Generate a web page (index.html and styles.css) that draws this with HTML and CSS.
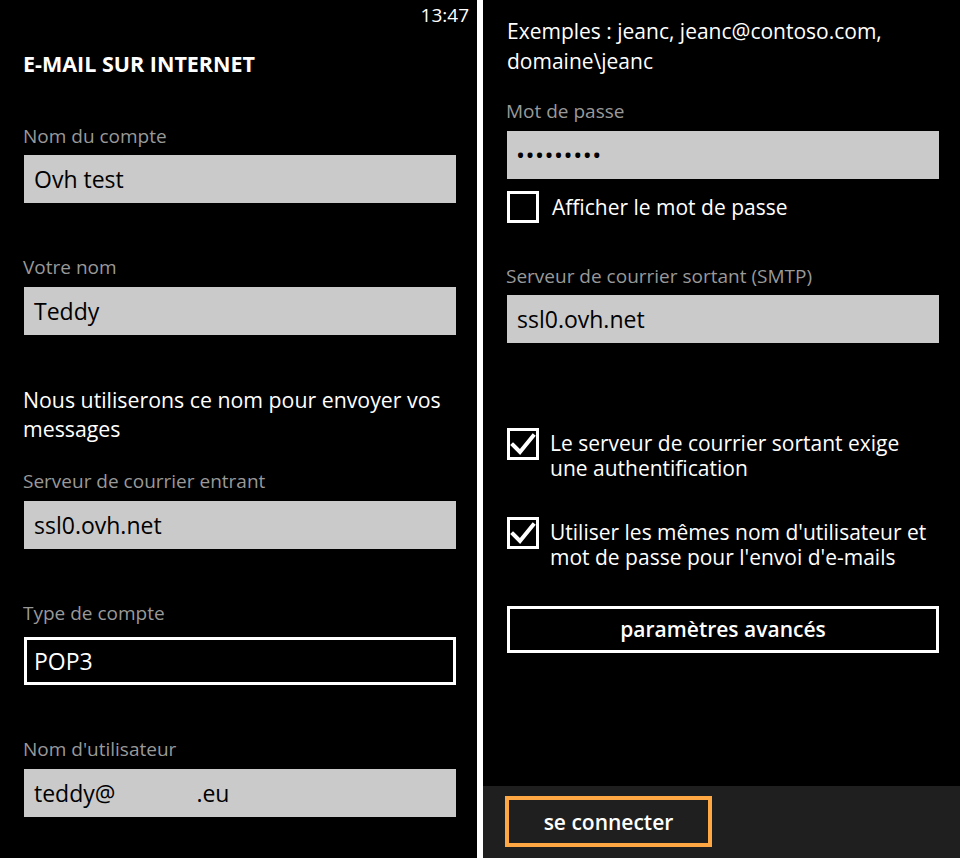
FILE: index.html
```html
<!DOCTYPE html>
<html lang="fr">
<head>
<meta charset="utf-8">
<title>E-mail sur Internet</title>
<link rel="stylesheet" href="styles.css">
</head>
<body>
<div class="screens">
  <section class="panel left">
    <div class="status"><span class="time">13:47</span></div>
    <h1 class="title">E-MAIL SUR INTERNET</h1>

    <div class="field f1">
      <div class="label">Nom du compte</div>
      <div class="input">Ovh test</div>
    </div>

    <div class="field f2">
      <div class="label">Votre nom</div>
      <div class="input">Teddy</div>
    </div>

    <p class="note">Nous utiliserons ce nom pour envoyer vos messages</p>

    <div class="field f3">
      <div class="label">Serveur de courrier entrant</div>
      <div class="input">ssl0.ovh.net</div>
    </div>

    <div class="field f4">
      <div class="label">Type de compte</div>
      <div class="select">POP3</div>
    </div>

    <div class="field f5">
      <div class="label">Nom d'utilisateur</div>
      <div class="input">teddy@<span class="gap"></span>.eu</div>
    </div>
  </section>

  <div class="divider"></div>

  <section class="panel right">
    <div class="content">
      <p class="examples">Exemples : jeanc, jeanc@contoso.com, domaine\jeanc</p>

      <div class="field r1">
        <div class="label">Mot de passe</div>
        <div class="input pwd">•••••••••</div>
      </div>

      <div class="check r-show">
        <span class="box"></span>
        <span class="check-text">Afficher le mot de passe</span>
      </div>

      <div class="field r2">
        <div class="label">Serveur de courrier sortant (SMTP)</div>
        <div class="input">ssl0.ovh.net</div>
      </div>

      <div class="check multi r-auth">
        <span class="box checked"><svg viewBox="0 0 32 32" width="32" height="32"><polyline points="6,17 13,24 26,8" fill="none" stroke="#fff" stroke-width="4" stroke-linecap="square"/></svg></span>
        <span class="check-text">Le serveur de courrier sortant exige une authentification</span>
      </div>

      <div class="check multi r-same">
        <span class="box checked"><svg viewBox="0 0 32 32" width="32" height="32"><polyline points="6,17 13,24 26,8" fill="none" stroke="#fff" stroke-width="4" stroke-linecap="square"/></svg></span>
        <span class="check-text">Utiliser les mêmes nom d'utilisateur et mot de passe pour l'envoi d'e-mails</span>
      </div>

      <div class="button advanced">paramètres avancés</div>
    </div>

    <div class="appbar">
      <div class="button connect">se connecter</div>
    </div>
  </section>
</div>
</body>
</html>
```

FILE: styles.css
```css
* { box-sizing: border-box; }

html, body {
  margin: 0;
  padding: 0;
  background: #000;
}

body {
  font-family: "Open Sans", "Noto Sans", "Liberation Sans", sans-serif;
  color: #fff;
  width: 960px;
  height: 858px;
  overflow: hidden;
}

.screens {
  display: flex;
  width: 960px;
  height: 858px;
}

.panel {
  width: 477px;
  height: 858px;
  background: #000;
  display: flex;
  flex-direction: column;
}

.divider {
  width: 6px;
  background: #fff;
}

/* ---------- left ---------- */
.left {
  padding-left: 24px;
  padding-right: 21px;
}

.status {
  height: 31px;
  line-height: 31px;
  font-size: 19px;
  text-align: right;
  margin-right: -13px;
}

.title {
  margin: 18px 0 0 -1px;
  font-size: 21.5px;
  line-height: 30px;
  font-weight: 700;
}

.label {
  font-size: 19px;
  line-height: 24px;
  height: 24px;
  color: #999;
  margin-left: -1px;
  white-space: nowrap;
}

.input {
  margin-top: 7px;
  height: 48px;
  background: #cacaca;
  color: #000;
  font-size: 23px;
  line-height: 48px;
  padding-left: 10px;
  white-space: nowrap;
}

.select {
  margin-top: 12px;
  height: 48px;
  border: 3px solid #fff;
  color: #fff;
  font-size: 23px;
  line-height: 42px;
  padding-left: 7px;
}

.gap {
  display: inline-block;
  width: 81px;
}

.f1 { margin-top: 45px; }
.f2 { margin-top: 52px; }
.f2 .input { margin-top: 8px; }
.note {
  margin: 50px 0 0 -1px;
  font-size: 21.3px;
  line-height: 29px;
}
.f3 { margin-top: 26px; }
.f3 .input { margin-top: 8px; }
.f4 { margin-top: 52px; }
.f5 { margin-top: 52px; }
.f5 .input { margin-top: 8px; }

/* ---------- right ---------- */
.right {
  justify-content: space-between;
}

.content {
  padding: 16px 21px 0 24px;
}

.examples {
  margin: 0;
  font-size: 21px;
  line-height: 30px;
}

.r1 { margin-top: 23px; }
.r1 .input { margin-top: 8px; }

.pwd {
  font-size: 24px;
  letter-spacing: 0.5px;
  padding-left: 9px;
}

.check {
  display: flex;
  align-items: flex-start;
}

.box {
  flex: none;
  width: 32px;
  height: 32px;
  border: 3px solid #fff;
  position: relative;
}

.box svg {
  position: absolute;
  left: -3px;
  top: -3px;
}

.check-text {
  margin-left: 13px;
  font-size: 21px;
  line-height: 32px;
}

.r-show { margin-top: 12px; }

.r2 { margin-top: 41px; }

.multi .check-text {
  margin-left: 11px;
  line-height: 25px;
  padding-top: 3px;
}

.r-auth { margin-top: 85px; }
.r-same { margin-top: 36px; }

.button {
  display: flex;
  align-items: center;
  justify-content: center;
  font-weight: 600;
  font-size: 21px;
  color: #fff;
}

.advanced {
  margin-top: 36px;
  height: 47px;
  border: 3px solid #fff;
  padding-bottom: 2px;
}

.appbar {
  height: 72px;
  background: #1f1f1f;
  padding: 10px 0 0 22px;
}

.connect {
  width: 207px;
  height: 51px;
  border: 4px solid #ffa843;
}
```
